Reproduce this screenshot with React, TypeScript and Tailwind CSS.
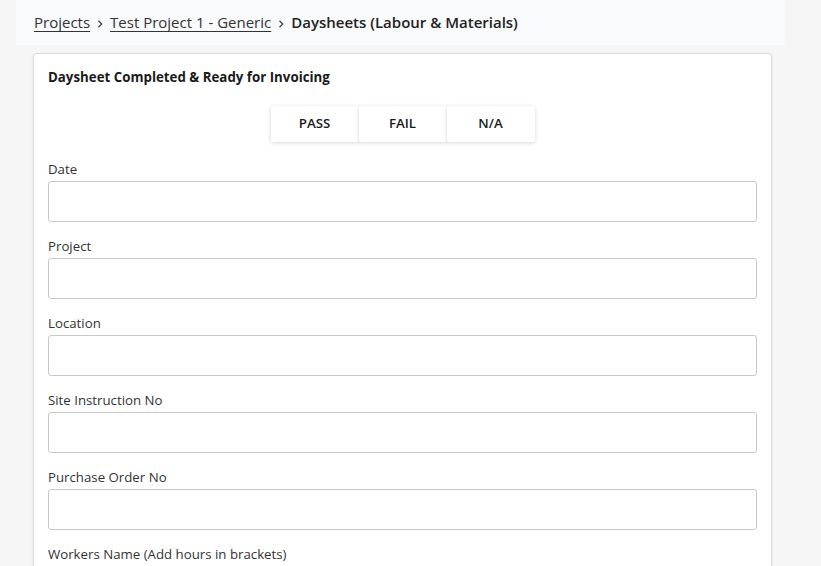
import React from "react";

const fields = [
  "Date",
  "Project",
  "Location",
  "Site Instruction No",
  "Purchase Order No",
  "Workers Name (Add hours in brackets)",
];

function Chevron() {
  return (
    <svg width="12" height="10" viewBox="0 0 12 10" className="mx-[4px] mt-[2px]">
      <path d="M4.5 1.8 L7.7 5 L4.5 8.2" fill="none" stroke="#444" strokeWidth="1.3" />
    </svg>
  );
}

export default function App() {
  return (
    <div
      className="min-h-[566px] h-[566px] overflow-hidden bg-[#f6f6f6] text-[#222]"
      style={{ fontFamily: '"Open Sans", "Noto Sans", sans-serif' }}
    >
      <div className="ml-[16px] w-[769px] h-[45px] bg-[#f9fafb] pl-[18px] flex items-center text-[15px]">
        <a className="underline underline-offset-[3px] text-[#333]">Projects</a>
        <Chevron />
        <a className="underline underline-offset-[3px] text-[#333]">Test Project 1 - Generic</a>
        <Chevron />
        <span className="font-semibold text-[#222]">Daysheets (Labour &amp; Materials)</span>
      </div>
      <div className="ml-[33px] mt-[8px] w-[739px] bg-white border border-[#dcdcdc] rounded-[4px] shadow-[0_1px_3px_rgba(0,0,0,0.08)] px-[14px] pt-[14px]">
        <div className="text-[13.3px] leading-[18px] font-bold text-[#1a1a1a]">
          Daysheet Completed &amp; Ready for Invoicing
        </div>
        <div className="flex justify-center mt-[20px] mb-[17px]">
          {["PASS", "FAIL", "N/A"].map((t) => (
            <div
              key={t}
              className="w-[88px] h-[36px] flex items-center justify-center text-[13.3px] font-semibold text-[#1a1a1a] bg-white rounded-[2px] shadow-[0_1px_4px_rgba(0,0,0,0.16)]"
            >
              {t}
            </div>
          ))}
        </div>
        {fields.map((f) => (
          <div key={f} className="mb-[14px]">
            <div className="text-[13.25px] leading-[20px] text-[#333] mb-[2px]">{f}</div>
            <div className="h-[41px] border border-[#c8c8c8] rounded-[3px] bg-white" />
          </div>
        ))}
      </div>
    </div>
  );
}
